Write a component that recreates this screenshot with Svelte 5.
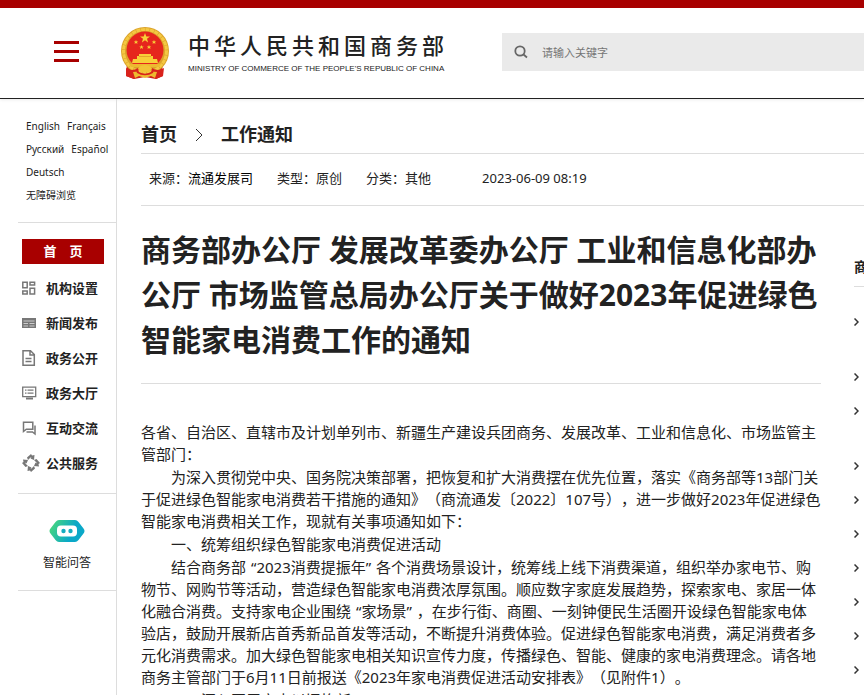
<script lang="ts">
	interface NavItem {
		label: string;
		icon: string;
	}

	const languages = ['English', 'Français', 'Русский', 'Español', 'Deutsch', '无障碍浏览'];

	const navItems: NavItem[] = [
		{ label: '机构设置', icon: 'grid' },
		{ label: '新闻发布', icon: 'news' },
		{ label: '政务公开', icon: 'doc' },
		{ label: '政务大厅', icon: 'screen' },
		{ label: '互动交流', icon: 'chat' },
		{ label: '公共服务', icon: 'service' }
	];

	const meta = [
		{ label: '来源', value: '流通发展司', strong: true },
		{ label: '类型', value: '原创', strong: false },
		{ label: '分类', value: '其他', strong: false }
	];

	const paragraphs = [
		'各省、自治区、直辖市及计划单列市、新疆生产建设兵团商务、发展改革、工业和信息化、市场监管主管部门：',
		'　　为深入贯彻党中央、国务院决策部署，把恢复和扩大消费摆在优先位置，落实《商务部等13部门关于促进绿色智能家电消费若干措施的通知》（商流通发〔2022〕107号），进一步做好2023年促进绿色智能家电消费相关工作，现就有关事项通知如下：',
		'　　一、统筹组织绿色智能家电消费促进活动',
		'　　结合商务部“2023消费提振年”各个消费场景设计，统筹线上线下消费渠道，组织举办家电节、购物节、网购节等活动，营造绿色智能家电消费浓厚氛围。顺应数字家庭发展趋势，探索家电、家居一体化融合消费。支持家电企业围绕“家场景”，在步行街、商圈、一刻钟便民生活圈开设绿色智能家电体验店，鼓励开展新店首秀新品首发等活动，不断提升消费体验。促进绿色智能家电消费，满足消费者多元化消费需求。加大绿色智能家电相关知识宣传力度，传播绿色、智能、健康的家电消费理念。请各地商务主管部门于6月11日前报送《2023年家电消费促进活动安排表》（见附件1）。',
		'　　二、深入开展家电以旧换新'
	];

	// Number of text lines each related entry takes
	const related = [2, 1, 2, 1, 1, 1, 1, 1, 1, 1];

	let keyword = $state('');

	// Split a paragraph into plain and quoted runs
	function runs(text: string): string[] {
		return text.split(/(“[^”]*”)/).filter(Boolean);
	}
</script>

<div class="page">
	<header class="header">
		<button type="button" class="menu" aria-label="菜单">
			<span></span><span></span><span></span>
		</button>
		<a class="brand" href="#home">
			<svg class="emblem" viewBox="0 0 50 54" aria-hidden="true">
				<path d="M7 36 6 50l8 3 11-2 11 2 7-3-1-14z" fill="#cf1f1a" />
				<circle cx="25" cy="25" r="24" fill="#dca32a" />
				<circle cx="25" cy="25" r="21.500" fill="none" stroke="#f4c842" stroke-width="3" stroke-dasharray="4 .6" />
				<circle cx="25" cy="24" r="18.500" fill="#e6251d" />
				<path d="m25 7 1.300 3.500h3.700l-3 2.300 1.100 3.600-3.100-2.200-3.100 2.200 1.100-3.600-3-2.300h3.700z" fill="#f8cf38" />
				<path d="m16 14 .7 1.500h1.500l-1.200 1 .5 1.600-1.500-1-1.500 1 .5-1.600-1.200-1h1.500zm18 0 .7 1.500h1.500l-1.200 1 .5 1.600-1.500-1-1.500 1 .5-1.600-1.200-1h1.500zM21.500 19l.7 1.500h1.500l-1.200 1 .5 1.600-1.500-1-1.500 1 .5-1.600-1.200-1h1.500zm7.500 0 .7 1.500h1.500l-1.200 1 .5 1.600-1.500-1-1.500 1 .5-1.600-1.200-1h1.500z" fill="#f8cf38" />
				<path d="M19 28h12v2h2v3h4l1 4H12l1-4h4v-3h2z" fill="#f8cf38" />
				<path d="M19 30.500h12" stroke="#d98a22" stroke-width=".6" />
				<path d="M9 38h32l-2 3H11z" fill="#edb92f" />
				<path d="M6 42q6 4 12 0l1 5-5 6-8-3zM44 42q-6 4-12 0l-1 5 5 6 7-3z" fill="#d9221c" />
				<path d="M18 42q3-3 7-3t7 3l-3 4h-8z" fill="#f3c337" />
				<path d="M13 46q5-1 7 1 5 2 10 0 2-2 7-1l-2 6-4-2-6 2-6-2-4 2z" fill="#edb92f" />
				<path d="M17 46q8 5 16 0" fill="none" stroke="#d9221c" stroke-width="1.500" />
			</svg>
			<span class="brand-text">
				<span class="brand-zh">中华人民共和国商务部</span>
				<span class="brand-en">MINISTRY OF COMMERCE OF THE PEOPLE'S REPUBLIC OF CHINA</span>
			</span>
		</a>
		<form class="search" role="search">
			<button type="submit" aria-label="搜索">
				<svg width="14" height="14" viewBox="0 0 14 14" fill="none" stroke="#666" stroke-width="1.800">
					<circle cx="6" cy="6" r="4.700" />
					<path d="m9.500 9.500 3.500 3" />
				</svg>
			</button>
			<input type="text" bind:value={keyword} placeholder="请输入关键字" aria-label="请输入关键字" />
		</form>
	</header>

	<div class="body">
		<aside class="sidebar">
			<div class="languages">
				{#each languages as language}
					<a href="#lang">{language}</a>
				{/each}
			</div>

			<nav class="nav">
				<a class="nav-home" href="#home">首　页</a>
				{#each navItems as item}
					<a class="nav-item" href="#nav">
						<svg width="18" height="18" viewBox="0 0 18 18" fill="none" stroke="#777" stroke-width="1.500" aria-hidden="true">
							{#if item.icon === 'grid'}
								<path d="M.8 3.200h4.400v5.600H.8zM8 3.200h4.600v2.800H8zM.8 12h4.400v3H.8zM8 9.200h4.600V15H8z" />
							{:else if item.icon === 'news'}
								<path d="M0 4h14v10H0z" fill="#777" stroke="none" />
								<path d="M1.500 7h11M1.500 9.500h4.500M7.500 9.500h5M1.500 12h4.500M7.500 12h5" stroke="#ccc" stroke-width="1" />
							{:else if item.icon === 'doc'}
								<path d="M1 1.800h7.500L12.300 5.500v10.700H1zM8 2v4h4" />
								<path d="M3.500 9.500h6M3.500 12.500h6" />
							{:else if item.icon === 'screen'}
								<path d="M.7 3.200h13v9.500H.7zM3 6.200h1.500M5.500 6.200h6M3 9.200h1.500M5.500 9.200h6" stroke-width="1.300" />
								<path d="M4 14.500h7" stroke-width="2" />
							{:else if item.icon === 'chat'}
								<path d="M1.500 3.200h9.300v7H4.300l-2.800 2.300z" />
								<path d="M13 6.500v8.500l-2.500-2H4.500" />
							{:else}
								<path d="m5 3.500 4-3.500 1 1.500L12.500 1l-.5 5-3.500-1.500L9.500 3.500 8.500 3.500 6 6zM14.500 5l3.500 4-1.500 1 .5 2.500-5-.5 1.500-3.500 1 1V8.500L12 6zM13 14.500 9 18l-1-1.500L5.500 17l.5-5 3.500 1.500-1 1h1L12 12zM3.500 13 0 9l1.500-1L1 5.500l5 .5-1.500 3.500-1-1v1L6 12z" fill="#777" stroke="none" />
							{/if}
						</svg>
						<span>{item.label}</span>
					</a>
				{/each}
			</nav>

			<a class="assistant" href="#assistant">
				<svg width="36" height="24" viewBox="0 0 36 24" aria-hidden="true">
					<defs>
						<linearGradient id="bot" x1="0" x2="1" y1="0" y2="0.300">
							<stop offset="0.100" stop-color="#45d57f" />
							<stop offset="0.750" stop-color="#0aa8c8" />
						</linearGradient>
					</defs>
					<path d="M10 1h16q2 0 3.500 2l5 6.500q2 2.500 0 5L29.500 21q-1.500 2-3.500 2H10q-2 0-3.500-2l-5-6.500q-2-2.500 0-5L6.500 3Q8 1 10 1z" fill="url(#bot)" />
					<rect x="8" y="6.500" width="20" height="11" rx="4" fill="#fff" />
					<circle cx="14.500" cy="12" r="2.200" fill="#14adc0" />
					<circle cx="21.500" cy="12" r="2.200" fill="#14adc0" />
				</svg>
				<span>智能问答</span>
			</a>
		</aside>

		<main class="main">
			<nav class="crumbs" aria-label="位置">
				<a href="#home">首页</a>
				<svg width="8" height="14" viewBox="0 0 8 14" fill="none" stroke="#333" aria-hidden="true">
					<path d="m1 1 6 6-6 6" />
				</svg>
				<a href="#notices">工作通知</a>
			</nav>
			<div class="meta">
				{#each meta as entry}
					<span>{entry.label}：<span class:strong={entry.strong}>{entry.value}</span></span>
				{/each}
				<time datetime="2023-06-09T08:19">2023-06-09 08:19</time>
			</div>

			<div class="columns">
				<article class="article">
					<h1>商务部办公厅 发展改革委办公厅 工业和信息化部办公厅 市场监管总局办公厅关于做好2023年促进绿色智能家电消费工作的通知</h1>
					<div class="content">
						{#each paragraphs as paragraph}
							<p>{#each runs(paragraph) as run}<span class:quoted={run.startsWith('“')}>{run}</span>{/each}</p>
						{/each}
					</div>
				</article>

				<section class="related">
					<h2>商</h2>
					<ul>
						{#each related as lines}
							<li class:double={lines === 2}>
								<svg width="5" height="8" viewBox="0 0 5 8" fill="none" stroke="#333" stroke-width="1.500" aria-hidden="true">
									<path d="m.5.5 3.500 3.500L.5 7.500" />
								</svg>
							</li>
						{/each}
					</ul>
				</section>
			</div>
		</main>
	</div>
</div>

<style>
	:global(body) {
		background: #fff;
	}

	.page {
		height: 100vh;
		overflow: hidden;
		display: flex;
		flex-direction: column;
		box-sizing: border-box;
		border-top: 8px solid #a80000;
		font-family: 'Noto Sans', 'Noto Sans CJK SC', sans-serif;
		color: #222;
		text-spacing-trim: space-all;
	}

	a {
		color: inherit;
		text-decoration: none;
	}

	.header {
		display: flex;
		flex-shrink: 0;
		align-items: center;
		height: 88px;
		padding: 0 0 2px 54px;
		border-bottom: 1px solid #222;
		box-shadow: 0 1px 3px rgba(0, 0, 0, 0.08);
	}

	.menu {
		display: flex;
		flex-direction: column;
		gap: 6px;
		width: 25px;
		padding: 0 0 2px;
		border: 0;
		background: none;
		cursor: pointer;
	}

	.menu span {
		height: 3px;
		background: #a80000;
	}

	.brand {
		display: flex;
		flex-shrink: 0;
		align-items: center;
		gap: 18px;
		margin-left: 41px;
		padding-top: 2px;
	}

	.emblem {
		width: 50px;
		height: 54px;
	}

	.brand-text {
		display: flex;
		flex-direction: column;
		gap: 4px;
		width: 253px;
		white-space: nowrap;
	}

	.brand-zh {
		font-size: 22px;
		font-weight: 500;
		line-height: 28px;
		letter-spacing: 4px;
	}

	.brand-en {
		font-family: 'Liberation Sans', Arial, sans-serif;
		font-size: 8px;
		line-height: 12px;
	}

	.search {
		display: flex;
		flex: 1;
		align-items: center;
		height: 38px;
		margin-left: 61px;
		background: #eaeaea;
	}

	.search button {
		display: flex;
		padding: 0 14px 0 12px;
		border: 0;
		background: none;
		cursor: pointer;
	}

	.search input {
		flex: 1;
		min-width: 0;
		padding: 0;
		border: 0;
		outline: none;
		background: none;
		font-family: inherit;
		font-size: 11px;
		color: #333;
	}

	.search input::placeholder {
		color: #757575;
	}

	.body {
		display: flex;
		flex: 1;
		min-height: 0;
	}

	.sidebar {
		flex: 0 0 98px;
		margin-left: 18px;
		border-right: 1px solid #ddd;
	}

	.languages {
		display: flex;
		flex-wrap: wrap;
		column-gap: 7px;
		padding: 16px 0 15px 8px;
		border-bottom: 1px solid #ddd;
		font-size: 10px;
		line-height: 23px;
	}

	.nav {
		display: flex;
		flex-direction: column;
		padding: 16px 12px 13px 4px;
		border-bottom: 1px solid #ddd;
		font-size: 13px;
		font-weight: 700;
	}

	.nav-home {
		margin-bottom: 6px;
		background: #a80000;
		color: #fff;
		line-height: 25px;
		text-align: center;
	}

	.nav-item {
		display: flex;
		align-items: center;
		gap: 6px;
		height: 35px;
		white-space: nowrap;
	}

	.assistant {
		display: flex;
		flex-direction: column;
		align-items: center;
		gap: 10px;
		padding: 25px 0 17px;
		border-bottom: 1px solid #ddd;
		font-size: 12px;
		line-height: 20px;
	}

	.main {
		flex: 1;
		min-width: 0;
		margin-left: 24px;
	}

	.crumbs {
		display: flex;
		align-items: center;
		gap: 18px;
		padding: 22px 0 5px;
		border-bottom: 1px solid #ddd;
		font-size: 18px;
		font-weight: 700;
		line-height: 27px;
	}

	.meta {
		display: flex;
		gap: 24px;
		padding: 14px 8px 17px;
		border-bottom: 1px solid #ddd;
		font-size: 13px;
		line-height: 20px;
		white-space: nowrap;
	}

	.meta .strong {
		color: #000;
	}

	.meta time {
		margin-left: 27px;
	}

	.columns {
		display: flex;
		gap: 33px;
		overflow: hidden;
	}

	.article {
		flex: 0 0 680px;
	}

	h1 {
		margin: 0;
		padding: 21px 0;
		border-bottom: 1px solid #ddd;
		font-size: 30px;
		font-weight: 700;
		line-height: 45px;
	}

	.content {
		display: flex;
		flex-direction: column;
		gap: 1px;
		padding-top: 37px;
		font-size: 15px;
		line-height: 22px;
	}

	.content p {
		margin: 0;
	}

	.content .quoted {
		margin: 0 5px;
	}

	.related {
		flex: 1 0 260px;
	}

	.related h2 {
		margin: 0;
		padding: 50px 0 8px;
		border-bottom: 1px solid #ddd;
		font-size: 14px;
		line-height: 22px;
	}

	.related ul {
		margin: 0;
		padding: 22px 0 0;
		list-style: none;
	}

	.related li {
		height: 34px;
	}

	.related li.double {
		height: 55px;
	}
</style>
